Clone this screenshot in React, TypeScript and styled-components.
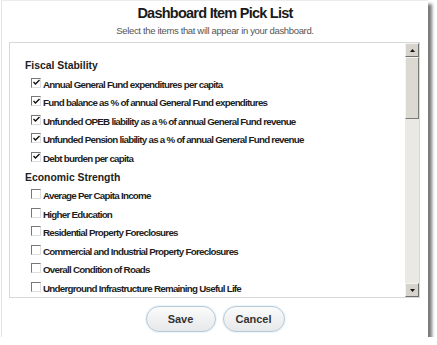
import React from "react";
import styled, { createGlobalStyle } from "styled-components";

const GlobalStyle = createGlobalStyle`
  html, body {
    margin: 0;
    padding: 0;
    background: #ffffff;
  }
  body {
    font-family: "Liberation Sans", Arial, sans-serif;
  }
`;

const Dialog = styled.div`
  width: 427px;
  height: 337px;
  box-sizing: border-box;
  background: #fff;
  border-left: 1px solid #e4e4e4;
  border-top: 1px solid #ececec;
  box-shadow: 4px 4px 3px #7a7a7a;
  margin-left: 1px;
  display: flex;
  flex-direction: column;
  align-items: center;
`;

const Title = styled.h1`
  margin: 3px 0 0;
  font-size: 14.5px;
  letter-spacing: -0.75px;
  font-weight: bold;
  color: #1a1a1a;
  line-height: 18px;
`;

const Subtitle = styled.p`
  margin: 3px 0 0;
  font-size: 9.5px;
  letter-spacing: -0.35px;
  color: #555;
  line-height: 12px;
`;

const ListBox = styled.div`
  margin-top: 5px;
  width: 411px;
  height: 256px;
  box-sizing: border-box;
  border: 1px solid #d8d8d8;
  display: flex;
  align-self: flex-start;
  margin-left: 7px;
`;

const ListContent = styled.div`
  flex: 1;
  overflow: hidden;
  padding: 13px 0 0 15px;
`;

const Heading = styled.div`
  font-size: 10.4px;
  font-weight: bold;
  color: #222;
  height: 19px;
  line-height: 19px;
`;

const Item = styled.label`
  display: flex;
  align-items: center;
  gap: 2px;
  height: 18.5px;
  padding-left: 6px;
  font-size: 9.8px;
  letter-spacing: -0.75px;
  font-weight: bold;
  color: #1e1e1e;
  white-space: nowrap;
`;

const Box = styled.span`
  width: 10px;
  height: 10px;
  flex: none;
  box-sizing: border-box;
  border-top: 1px solid #777;
  border-left: 1px solid #777;
  border-right: 1px solid #ddd;
  border-bottom: 1px solid #ddd;
  background: #fff;
  display: inline-flex;
  align-items: center;
  justify-content: center;
  margin-top: -3px;
`;

const ScrollBar = styled.div`
  width: 14px;
  display: flex;
  flex-direction: column;
  background: #ebe9e4;
`;

const ScrollButton = styled.div`
  height: 14px;
  box-sizing: border-box;
  background: #d6d3cc;
  border-top: 1px solid #f4f3f0;
  border-left: 1px solid #f4f3f0;
  border-right: 1px solid #6f6f6f;
  border-bottom: 1px solid #6f6f6f;
  display: flex;
  align-items: center;
  justify-content: center;
`;

const Thumb = styled.div`
  height: 62px;
  box-sizing: border-box;
  background: #dcd9d2;
  border-top: 1px solid #f4f3f0;
  border-left: 1px solid #f4f3f0;
  border-right: 1px solid #7a7a7a;
  border-bottom: 1px solid #7a7a7a;
`;

const Track = styled.div`
  flex: 1;
`;

const Footer = styled.div`
  display: flex;
  gap: 7px;
  margin-top: 8px;
`;

const PillButton = styled.button<{ $w: number }>`
  width: ${(p) => p.$w}px;
  height: 26px;
  border-radius: 13px;
  border: 1px solid #b4c9d8;
  box-shadow: 0 0 2px #c8dbe8;
  background: linear-gradient(#fbfbfb, #e6e8ea);
  font-family: "Liberation Sans", Arial, sans-serif;
  font-size: 11px;
  font-weight: bold;
  color: #333;
  padding: 0;
`;

const Check = () => (
  <svg width="7" height="7" viewBox="0 0 7 7">
    <path d="M0.5 3 L2.5 5 L6.5 1" stroke="#111" strokeWidth="1.4" fill="none" />
  </svg>
);

const Arrow = ({ up }: { up?: boolean }) => (
  <svg width="5" height="3" viewBox="0 0 5 3">
    <polygon points={up ? "0,3 5,3 2.5,0" : "0,0 5,0 2.5,3"} fill="#111" />
  </svg>
);

const groups = [
  {
    title: "Fiscal Stability",
    items: [
      ["Annual General Fund expenditures per capita", true],
      ["Fund balance as % of annual General Fund expenditures", true],
      ["Unfunded OPEB liability as a % of annual General Fund revenue", true],
      ["Unfunded Pension liability as a % of annual General Fund revenue", true],
      ["Debt burden per capita", true],
    ],
  },
  {
    title: "Economic Strength",
    items: [
      ["Average Per Capita Income", false],
      ["Higher Education", false],
      ["Residential Property Foreclosures", false],
      ["Commercial and Industrial Property Foreclosures", false],
      ["Overall Condition of Roads", false],
      ["Underground Infrastructure Remaining Useful Life", false],
    ],
  },
] as const;

const App = () => {
  return (
    <>
      <GlobalStyle />
      <Dialog>
        <Title>Dashboard Item Pick List</Title>
        <Subtitle>Select the items that will appear in your dashboard.</Subtitle>
        <ListBox>
          <ListContent>
            {groups.map((g) => (
              <div key={g.title}>
                <Heading>{g.title}</Heading>
                {g.items.map(([label, checked]) => (
                  <Item key={label}>
                    <Box>{checked && <Check />}</Box>
                    {label}
                  </Item>
                ))}
              </div>
            ))}
          </ListContent>
          <ScrollBar>
            <ScrollButton>
              <Arrow up />
            </ScrollButton>
            <Thumb />
            <Track />
            <ScrollButton>
              <Arrow />
            </ScrollButton>
          </ScrollBar>
        </ListBox>
        <Footer>
          <PillButton $w={70}>Save</PillButton>
          <PillButton $w={62}>Cancel</PillButton>
        </Footer>
      </Dialog>
    </>
  );
};

export default App;
